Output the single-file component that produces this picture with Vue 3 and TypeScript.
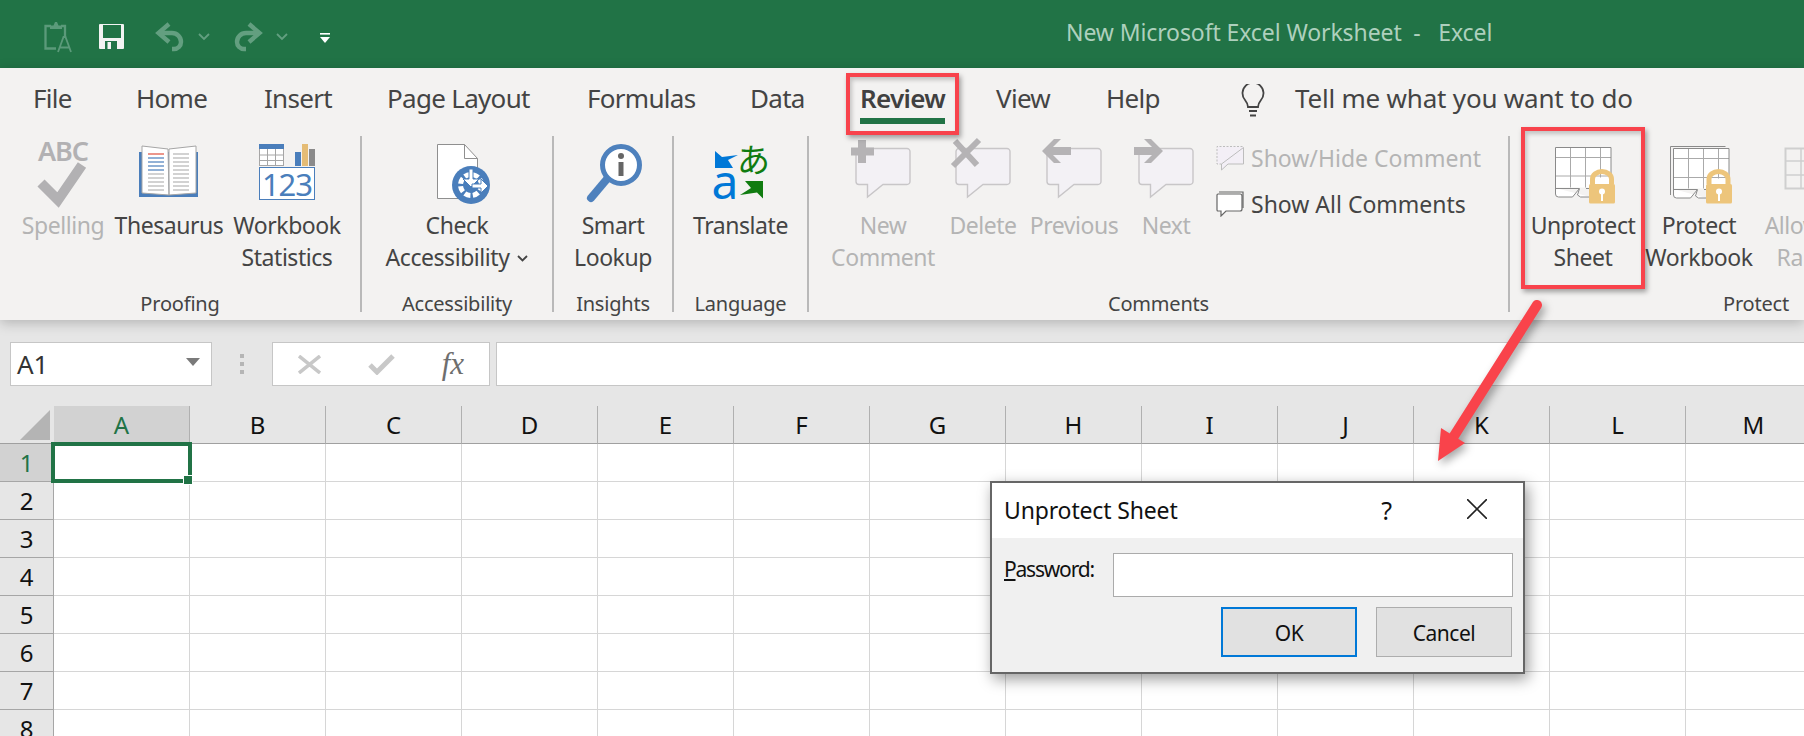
<script setup lang="ts">
const tabs = ['File', 'Home', 'Insert', 'Page Layout', 'Formulas', 'Data', 'Review', 'View', 'Help']
const columns = 'ABCDEFGHIJKLM'.split('')
const rows = [1, 2, 3, 4, 5, 6, 7, 8]

// thesaurus page lines
const pageLines = [12, 16, 20, 24, 28, 32, 36, 40, 44, 48]
function leftLineColor(i: number): string {
  if (i === 0) return '#e0503f'
  if (i < 5) return '#4a7ebb'
  return '#b5b5b5'
}
</script>

<template>
  <div class="page">
    <!-- title bar -->
    <header class="titlebar">
      <div class="qat">
        <svg class="qat-clip" width="28" height="32" viewBox="0 0 28 32" fill="none" stroke="#5b9a7a" stroke-width="2.3">
          <path d="M7 4H1.500v22.500H12M17 4h4v11" />
          <path d="M6 7V3.500h3.500L11 0h2l1.500 3.500H18V7z" fill="#5b9a7a" stroke="none" />
          <path d="M14 30 19.500 15h2L27 30M15.500 25.500h10" stroke-width="1.800" />
        </svg>
        <svg class="qat-save" width="25" height="25" viewBox="0 0 25 25">
          <path d="M1 0h23a1 1 0 0 1 1 1v23a1 1 0 0 1-1 1H1a1 1 0 0 1-1-1V1a1 1 0 0 1 1-1z" fill="#f3f3f3" />
          <rect x="4" y="1" width="18" height="13" fill="#217346" />
          <rect x="6" y="17" width="12" height="8" fill="#217346" />
          <rect x="8.500" y="18" width="3.500" height="7" fill="#f3f3f3" />
        </svg>
        <svg class="qat-undo" width="28" height="28" viewBox="0 0 28 28" fill="none" stroke="#639f80" stroke-width="4.400">
          <path d="M14 2 3.500 11 14 20" />
          <path d="M3.500 11H17a9 9 0 0 1 9 9 7 7 0 0 1-7 7h-2" />
        </svg>
        <svg class="qat-chev" width="12" height="8" viewBox="0 0 12 8" fill="none" stroke="#639f80" stroke-width="1.800"><path d="m1 1 5 5 5-5" /></svg>
        <svg class="qat-redo" width="28" height="28" viewBox="0 0 28 28" fill="none" stroke="#639f80" stroke-width="4.400">
          <path d="M14 2 24.500 11 14 20" />
          <path d="M24.500 11H11a9 9 0 0 0-9 9 7 7 0 0 0 7 7h2" />
        </svg>
        <svg class="qat-chev" width="12" height="8" viewBox="0 0 12 8" fill="none" stroke="#639f80" stroke-width="1.800"><path d="m1 1 5 5 5-5" /></svg>
        <svg class="qat-more" width="10" height="10" viewBox="0 0 10 10"><rect width="10" height="1.600" fill="#fff" /><path d="M0 4h10L5 10z" fill="#fff" /></svg>
      </div>
      <div class="doc-title">New Microsoft Excel Worksheet&nbsp;&nbsp;-&nbsp;&nbsp;&nbsp;Excel</div>
    </header>

    <!-- ribbon -->
    <section class="ribbon">
      <nav class="tabs">
        <div v-for="tab in tabs" :key="tab" class="tab">
          <span :class="{ active: tab === 'Review' }">{{ tab }}</span>
        </div>
        <svg class="bulb" width="24" height="33" viewBox="0 0 24 33" fill="none" stroke="#444" stroke-width="1.800">
          <path d="M7 23c0-3-1-4.500-3-7a10.500 10.500 0 1 1 16 0c-2 2.500-3 4-3 7z" />
          <path d="M8 27h8M9 31.500h6" />
        </svg>
        <div class="tell">Tell me what you want to do</div>
      </nav>

      <div class="groups">
        <!-- Proofing -->
        <div class="group g-proofing">
          <div class="group-body">
            <div class="btn w-spelling off">
              <svg class="ico" width="70" height="68" viewBox="0 0 70 68">
                <text x="35" y="19" class="abc">ABC</text>
                <path d="m13 41 17 17 24-35" fill="none" stroke="#b2b1b3" stroke-width="10" />
              </svg>
              <span class="lbl">Spelling</span>
            </div>
            <div class="btn w-thes">
              <svg class="ico" width="70" height="68" viewBox="0 0 70 68">
                <path d="M5 10h59v45H5z" fill="#4a7ebb" />
                <path d="M8 4l26 3 1 46-27-2zM62 4 35 7v46l27-2z" fill="#fff" stroke="#a6a6a6" stroke-width="1" />
                <path v-for="(y, i) in pageLines" :key="y" :d="`M14 ${y}h16`" :stroke="leftLineColor(i)" stroke-width="1.200" />
                <path v-for="y in pageLines" :key="y" :d="`M39 ${y}h16`" stroke="#b5b5b5" stroke-width="1.200" />
              </svg>
              <span class="lbl">Thesaurus</span>
            </div>
            <div class="btn w-stats">
              <svg class="ico" width="70" height="68" viewBox="0 0 70 68">
                <rect x="7.500" y="2.500" width="24" height="21" fill="#fff" stroke="#a6a6a6" />
                <rect x="7" y="2" width="25" height="5" fill="#4a7ebb" />
                <path d="M7 13h25M7 18.500h25M15.500 7v16M23.500 7v16" stroke="#a6a6a6" />
                <rect x="43" y="10" width="6" height="14" fill="#4a7ebb" />
                <rect x="50" y="2" width="6" height="22" fill="#e5bc75" />
                <rect x="57" y="7" width="6" height="17" fill="#8a8a8a" />
                <rect x="7.500" y="25.500" width="55" height="32" fill="#fff" stroke="#4a7ebb" />
                <text x="35" y="54" class="nums">123</text>
              </svg>
              <span class="lbl">Workbook<br />Statistics</span>
            </div>
          </div>
          <div class="group-label">Proofing</div>
        </div>

        <!-- Accessibility -->
        <div class="group g-access">
          <div class="group-body center">
            <div class="btn">
              <svg class="ico" width="70" height="68" viewBox="0 0 70 68">
                <path d="M15.500 2.500h27l13 14v40h-40z" fill="#fff" stroke="#8f8f8f" />
                <path d="M42.500 2.500v14h13" fill="none" stroke="#8f8f8f" />
                <circle cx="49" cy="43" r="19" fill="#4a7ebb" />
                <circle cx="49" cy="43" r="10.500" fill="none" stroke="#fff" stroke-width="5" stroke-dasharray="6 2.500" />
                <circle cx="49" cy="43" r="7" fill="#4a7ebb" />
                <path d="M47 27h4v10h6l-8 8-8-8h6z" fill="#fff" stroke="#4a7ebb" />
                <path d="M50 42h9v-5l7 7-7 7v-5h-9z" fill="#fff" stroke="#4a7ebb" />
              </svg>
              <span class="lbl">Check<br />Accessibility<svg class="chev" width="11" height="7" viewBox="0 0 11 7" fill="none" stroke="#444" stroke-width="1.800"><path d="m1 1 4.500 4.500L10 1" /></svg></span>
            </div>
          </div>
          <div class="group-label">Accessibility</div>
        </div>

        <!-- Insights -->
        <div class="group g-insights">
          <div class="group-body center">
            <div class="btn">
              <svg class="ico" width="70" height="68" viewBox="0 0 70 68">
                <path d="M29 37 13 56" stroke="#4e81bd" stroke-width="8" stroke-linecap="round" />
                <circle cx="43" cy="23" r="18.500" fill="#fff" stroke="#4e81bd" stroke-width="5" />
                <circle cx="43" cy="14" r="3" fill="#666" />
                <rect x="40.500" y="20" width="5" height="14" fill="#666" />
              </svg>
              <span class="lbl">Smart<br />Lookup</span>
            </div>
          </div>
          <div class="group-label">Insights</div>
        </div>

        <!-- Language -->
        <div class="group g-language">
          <div class="group-body center">
            <div class="btn">
              <svg class="ico" width="70" height="68" viewBox="0 0 70 68">
                <path d="M9 9l7 6 16-2-10 5 5 8H9z" fill="#0078d7" />
                <text x="47.500" y="30" class="kana">あ</text>
                <text x="19" y="57" class="latin-a">a</text>
                <path d="M57 39v17.500l-6-6-17 2.500 11-7-6-7z" fill="#107c10" />
              </svg>
              <span class="lbl">Translate</span>
            </div>
          </div>
          <div class="group-label">Language</div>
        </div>

        <!-- Comments -->
        <div class="group g-comments">
          <div class="group-body pad-comments">
            <div class="btn w-new off">
              <svg class="ico" width="70" height="68" viewBox="0 0 70 68">
                <path class="bubble" d="M11 6.500h48a3 3 0 0 1 3 3v30a3 3 0 0 1-3 3H35L19.500 55V42.500H11a3 3 0 0 1-3-3v-30a3 3 0 0 1 3-3z" />
                <path d="M10 -2h8v7.500h8v8h-8V21h-8v-7.500H3v-8h7z" fill="#b5b3b5" />
              </svg>
              <span class="lbl">New<br />Comment</span>
            </div>
            <div class="btn w-del off">
              <svg class="ico" width="70" height="68" viewBox="0 0 70 68">
                <path class="bubble" d="M11 6.500h48a3 3 0 0 1 3 3v30a3 3 0 0 1-3 3H35L19.500 55V42.500H11a3 3 0 0 1-3-3v-30a3 3 0 0 1 3-3z" />
                <path d="M7-1l22 24M31-2 5 24" stroke="#b5b3b5" stroke-width="6" />
              </svg>
              <span class="lbl">Delete</span>
            </div>
            <div class="btn w-prev off">
              <svg class="ico" width="70" height="68" viewBox="0 0 70 68">
                <path class="bubble" d="M11 6.500h48a3 3 0 0 1 3 3v30a3 3 0 0 1-3 3H35L19.500 55V42.500H11a3 3 0 0 1-3-3v-30a3 3 0 0 1 3-3z" />
                <path d="M15-3 3 9l12 12h7l-8-8h18V5H14l8-8z" fill="#b5b3b5" />
              </svg>
              <span class="lbl">Previous</span>
            </div>
            <div class="btn w-next off">
              <svg class="ico" width="70" height="68" viewBox="0 0 70 68">
                <path class="bubble" d="M11 6.500h48a3 3 0 0 1 3 3v30a3 3 0 0 1-3 3H35L19.500 55V42.500H11a3 3 0 0 1-3-3v-30a3 3 0 0 1 3-3z" />
                <path d="M20-3 32 9 20 21h-7l8-8H3V5h18l-8-8z" fill="#b5b3b5" />
              </svg>
              <span class="lbl">Next</span>
            </div>
            <div class="comment-list">
              <div class="comment-row off">
                <svg width="28" height="25" viewBox="0 0 28 25" fill="none">
                  <path d="M1 .5h26.500v17.500H12l-6.500 6V18H1z" fill="#f3eff6" />
                  <path d="M5.500 18 27.500 1.500V18H12l-6.500 6z" stroke="#bdbdbd" />
                  <path d="M5.500 18H1V.5h26.500" stroke="#bdbdbd" stroke-dasharray="2 1.500" />
                </svg>
                <span>Show/Hide Comment</span>
              </div>
              <div class="comment-row">
                <svg width="28" height="26" viewBox="0 0 28 26" fill="none" stroke="#666" stroke-width="1.200">
                  <path d="M3 1h24v16" />
                  <path d="M2 3h22a2 2 0 0 1 2 2v13a2 2 0 0 1-2 2H10l-5 5v-5H2a1 1 0 0 1-1-1V4a1 1 0 0 1 1-1z" fill="#fff" />
                </svg>
                <span>Show All Comments</span>
              </div>
            </div>
          </div>
          <div class="group-label">Comments</div>
        </div>

        <!-- Protect -->
        <div class="group g-protect">
          <div class="group-body pad-protect">
            <div class="btn w-prot">
              <svg class="ico" width="70" height="68" viewBox="0 0 70 68">
                <path d="M7.500 5.500h55.500v40H7.500z" fill="#fff" />
                <path d="M7.500 15.500H63M7.500 34H63M22.500 5.500v40M37.500 5.500v40M52.500 5.500v30" fill="none" stroke="#aaa" />
                <path d="M7.500 46V5.500H63v36" fill="none" stroke="#8a8a8a" />
                <path d="M7.500 46v6a3 3 0 0 0 3 3h14l7-8.500-2 6.500 3 2h10M7.500 46.500H31M38 46.500h7" fill="#fff" stroke="#8a8a8a" />
                <path d="M44.500 42v-5a9.500 7.500 0 0 1 19 0v5" fill="none" stroke="#edc57b" stroke-width="5" />
                <rect x="41" y="42" width="26" height="19.500" rx="1.500" fill="#edc57b" />
                <circle cx="54" cy="49.500" r="3" fill="#fff" />
                <rect x="53" y="50" width="2" height="9" fill="#fff" />
              </svg>
              <span class="lbl">Unprotect<br />Sheet</span>
            </div>
            <div class="btn w-prot">
              <svg class="ico" width="70" height="68" viewBox="0 0 70 68">
                <path d="M6.500 53V4.500h55" fill="none" stroke="#8a8a8a" />
                <path d="M9.500 6.500H65v40H9.500z" fill="#fff" />
                <path d="M9.500 16.500H65M9.500 35.500H65M24.500 6.500v40M39.500 6.500v40M54.500 6.500v30" fill="none" stroke="#aaa" />
                <path d="M9.500 47V6.500H65v36" fill="none" stroke="#8a8a8a" />
                <path d="M9.500 47v6a3 3 0 0 0 3 3h14l7-8.500-2 6.500 3 2h8M9.500 47.500H33M40 47.500h6" fill="#fff" stroke="#8a8a8a" />
                <path d="M45 42v-5a9.500 7.500 0 0 1 19 0v5" fill="none" stroke="#edc57b" stroke-width="5" />
                <rect x="42" y="42" width="26" height="19.500" rx="1.500" fill="#edc57b" />
                <circle cx="55" cy="49.500" r="3" fill="#fff" />
                <rect x="54" y="50" width="2" height="9" fill="#fff" />
              </svg>
              <span class="lbl">Protect<br />Workbook</span>
            </div>
            <div class="btn w-prot off">
              <svg class="ico" width="70" height="68" viewBox="0 0 70 68">
                <rect x="5.500" y="6.500" width="62" height="40" fill="#f3f2f1" stroke="#cfcfcf" stroke-width="2" />
                <path d="M5 19h62M5 33h62M21 6v40" stroke="#cfcfcf" stroke-width="1.500" />
              </svg>
              <span class="lbl">Allow Edit<br />Ranges</span>
            </div>
          </div>
          <div class="group-label">Protect</div>
        </div>
      </div>
    </section>

    <!-- formula bar -->
    <div class="formula-bar">
      <div class="name-box">
        <span>A1</span>
        <svg width="14" height="8" viewBox="0 0 14 8"><path d="M0 0h14L7 8z" fill="#7a7a7a" /></svg>
      </div>
      <div class="grip"><i></i><i></i><i></i></div>
      <div class="fx-box">
        <svg width="23" height="19" viewBox="0 0 23 19" fill="none" stroke="#c8c8c8" stroke-width="3.500"><path d="m1 1 21 17M22 1 1 18" /></svg>
        <svg width="27" height="21" viewBox="0 0 27 21" fill="none" stroke="#c8c8c8" stroke-width="5"><path d="m2 11 7 7L25 2" /></svg>
        <span class="fx">fx</span>
      </div>
      <div class="formula-input"></div>
    </div>

    <!-- sheet -->
    <div class="sheet">
      <div class="corner"><span class="corner-tri"></span></div>
      <div v-for="col in columns" :key="col" class="col-head" :class="{ sel: col === 'A' }">{{ col }}</div>
      <template v-for="row in rows" :key="row">
        <div class="row-head" :class="{ sel: row === 1 }">{{ row }}</div>
        <div v-for="col in columns" :key="col" class="cell">
          <div v-if="row === 1 && col === 'A'" class="cursor"><span class="handle"></span></div>
        </div>
      </template>
    </div>

    <!-- annotations -->
    <div class="callout call-review"></div>
    <div class="callout call-unprotect"></div>
    <svg class="arrow" width="1804" height="736" viewBox="0 0 1804 736">
      <path d="M1537 305 1454 436" stroke="#f9434b" stroke-width="10" stroke-linecap="round" />
      <path d="M1438 461l3-33 24 15z" fill="#f9434b" />
    </svg>

    <!-- dialog -->
    <div class="dialog">
      <div class="dlg-title">
        <span class="dlg-name">Unprotect Sheet</span>
        <span class="dlg-help">?</span>
        <svg class="dlg-close" width="20" height="20" viewBox="0 0 20 20" stroke="#222" stroke-width="1.600"><path d="m0 0 20 20M20 0 0 20" /></svg>
      </div>
      <div class="dlg-body">
        <div class="dlg-field">
          <label><u>P</u>assword:</label>
          <div class="dlg-input"></div>
        </div>
        <div class="dlg-actions">
          <button class="dlg-btn primary">OK</button>
          <button class="dlg-btn">Cancel</button>
        </div>
      </div>
    </div>
  </div>
</template>

<style scoped>
.page {
  position: relative;
  width: 1804px;
  height: 736px;
  overflow: hidden;
  background: #fff;
  font-family: 'Noto Sans', 'Open Sans', sans-serif;
  color: #444;
}

/* title bar */
.titlebar {
  position: relative;
  height: 68px;
  background: #217346;
}

.qat {
  display: flex;
  align-items: flex-start;
  padding: 22px 0 0 44px;
}
.qat svg { overflow: visible; }
.qat-clip { margin-right: 27px; }
.qat-save { margin-top: 2px; margin-right: 31px; }
.qat-undo { margin-right: 15px; }
.qat-redo { margin-right: 13px; }
.qat-chev { margin-top: 11px; margin-right: 25px; }
.qat-redo + .qat-chev { margin-right: 32px; }
.qat-more { margin-top: 11px; }

.doc-title {
  position: absolute;
  left: 1066px;
  top: 15px;
  font-size: 23px;
  line-height: 34px;
  color: #aed0bd;
  white-space: nowrap;
  letter-spacing: -0.1px;
}

/* ribbon */
.ribbon {
  position: relative;
  z-index: 2;
  height: 252px;
  background: #f3f2f1;
  box-shadow: 0 3px 12px rgba(0, 0, 0, 0.22);
}

.tabs {
  display: grid;
  grid-template-columns: 103px 128px 123px 200px 163px 110px 136px 110px 135px 54px auto;
  height: 68px;
  padding: 13px 0 0 33px;
  box-sizing: border-box;
  font-size: 26px;
  line-height: 34px;
  letter-spacing: -0.7px;
}
.tab span {
  display: inline-block;
  white-space: nowrap;
}
.tab .active {
  font-weight: 600;
  color: #404040;
  padding-bottom: 3px;
  border-bottom: 6px solid #217346;
}
.bulb { margin-top: 3px; }
.tell { white-space: nowrap; letter-spacing: -0.2px; }

.groups { display: flex; height: 176px; }
.group {
  flex: none;
  display: flex;
  flex-direction: column;
  box-sizing: border-box;
  border-right: 2px solid #b9b9b9;
}
.g-proofing { width: 362px; }
.g-access { width: 192px; }
.g-insights { width: 120px; }
.g-language { width: 135px; }
.g-comments { width: 701px; }
.g-protect { width: 492px; border-right: 0; }

.group-body {
  flex: 1;
  display: flex;
  padding: 6px 0 0 8px;
}
.group-body.center { justify-content: center; padding-left: 0; }
.pad-comments { padding-left: 14px; }
.pad-protect { padding-left: 15px; }

.group-label {
  height: 16px;
  line-height: 16px;
  text-align: center;
  font-size: 20px;
  letter-spacing: -0.2px;
  white-space: nowrap;
}

.btn {
  flex: none;
  display: flex;
  flex-direction: column;
  align-items: center;
  text-align: center;
}
.ico { flex: none; overflow: visible; }
.lbl {
  display: block;
  margin-top: -1px;
  font-size: 23px;
  line-height: 32px;
  letter-spacing: -0.45px;
  white-space: nowrap;
}
.off .lbl,
.off span { color: #b4b4b4; }
.chev { margin-left: 8px; vertical-align: 4px; }

.w-spelling { width: 110px; }
.w-thes { width: 102px; }
.w-stats { width: 134px; }
.w-new { width: 120px; }
.w-del { width: 80px; }
.w-prev { width: 102px; }
.w-next { width: 82px; }
.w-prot { width: 116px; }

.abc {
  font-size: 27px;
  font-weight: 600;
  fill: #b2b1b3;
  text-anchor: middle;
  letter-spacing: -1px;
}
.nums {
  font-size: 31px;
  fill: #4a7ebb;
  text-anchor: middle;
  letter-spacing: -1px;
}
.kana {
  font-family: 'Noto Sans CJK JP', sans-serif;
  font-size: 33px;
  fill: #107c10;
  text-anchor: middle;
}
.latin-a {
  font-size: 48px;
  fill: #0078d7;
  text-anchor: middle;
}
.bubble {
  fill: #f3f1f5;
  stroke: #c8c6c8;
  stroke-width: 1.4;
}

.comment-list {
  margin: -7px 0 0 9px;
  font-size: 23px;
}
.comment-row {
  display: flex;
  align-items: center;
  gap: 7px;
  height: 46px;
  white-space: nowrap;
}

/* formula bar */
.formula-bar {
  display: flex;
  align-items: flex-start;
  height: 86px;
  padding: 22px 0 0 10px;
  box-sizing: border-box;
  background: #e6e6e6;
}
.name-box,
.fx-box,
.formula-input {
  height: 44px;
  box-sizing: border-box;
  background: #fff;
  border: 1.5px solid #c6c6c6;
}
.name-box {
  flex: none;
  display: flex;
  align-items: center;
  justify-content: space-between;
  width: 202px;
  padding: 0 11px 0 6px;
  font-size: 26px;
  color: #333;
}
.name-box svg { margin-bottom: 4px; }
.grip {
  flex: none;
  display: flex;
  flex-direction: column;
  gap: 4px;
  margin: 12px 28px 0 28px;
}
.grip i {
  width: 4px;
  height: 4px;
  background: #b5b5b5;
}
.fx-box {
  flex: none;
  display: flex;
  align-items: center;
  justify-content: space-between;
  width: 218px;
  padding: 0 25px 0 25px;
}
.fx {
  font-family: 'Liberation Serif', serif;
  font-style: italic;
  font-size: 31px;
  color: #6e6e6e;
}
.formula-input {
  flex: 1;
  margin-left: 6px;
  border-right: 0;
}

/* sheet */
.sheet {
  display: grid;
  grid-template-columns: 54px repeat(13, 136px);
  grid-template-rows: 38px repeat(8, 38px);
}
.corner {
  display: flex;
  align-items: flex-end;
  justify-content: flex-end;
  padding: 0 4px 3px 0;
  background: #e6e6e6;
  border-bottom: 1.5px solid #a0a0a0;
}
.corner-tri {
  width: 30px;
  height: 30px;
  background: #b4b4b4;
  clip-path: polygon(100% 0, 100% 100%, 0 100%);
}
.col-head,
.row-head {
  display: flex;
  align-items: center;
  justify-content: center;
  box-sizing: border-box;
  background: #e6e6e6;
  font-size: 24px;
  color: #111;
}
.col-head {
  border-right: 1.5px solid #b0b0b0;
  border-bottom: 1.5px solid #a0a0a0;
}
.row-head {
  border-right: 1.5px solid #a6a6a6;
  border-bottom: 1.5px solid #a6a6a6;
}
.col-head.sel,
.row-head.sel {
  background: #d2d2d2;
  color: #217346;
}
.cell {
  position: relative;
  box-sizing: border-box;
  border-right: 1.5px solid #d6d6d6;
  border-bottom: 1.5px solid #d6d6d6;
}
.cursor {
  position: absolute;
  left: -3px;
  top: -2px;
  width: 141px;
  height: 41px;
  box-sizing: border-box;
  border: 4px solid #217346;
  z-index: 1;
}
.handle {
  position: absolute;
  right: -4px;
  bottom: -5px;
  width: 8px;
  height: 8px;
  background: #217346;
  box-shadow: 0 0 0 1px #fff;
}

/* annotations */
.callout {
  position: absolute;
  z-index: 3;
  box-sizing: border-box;
  border: 4px solid #f8434c;
  box-shadow: 2px 3px 5px rgba(0, 0, 0, 0.35), inset 2px 3px 4px rgba(0, 0, 0, 0.2);
}
.call-review {
  left: 846px;
  top: 73px;
  width: 113px;
  height: 62px;
}
.call-unprotect {
  left: 1521px;
  top: 127px;
  width: 124px;
  height: 162px;
}
.arrow {
  position: absolute;
  left: 0;
  top: 0;
  z-index: 3;
  pointer-events: none;
  filter: drop-shadow(3px 4px 4px rgba(0, 0, 0, 0.35));
}

/* dialog */
.dialog {
  position: absolute;
  z-index: 4;
  left: 990px;
  top: 481px;
  width: 535px;
  height: 193px;
  box-sizing: border-box;
  display: flex;
  flex-direction: column;
  border: 2px solid #666;
  background: #f0f0f0;
  box-shadow: 3px 5px 14px rgba(0, 0, 0, 0.4);
  color: #111;
}
.dlg-title {
  flex: none;
  display: flex;
  align-items: center;
  height: 55px;
  padding: 0 36px 0 12px;
  background: #fff;
}
.dlg-name {
  flex: 1;
  margin-bottom: 2px;
  font-size: 23px;
  letter-spacing: -0.15px;
}
.dlg-help {
  font-size: 25px;
  margin-right: 75px;
  margin-bottom: 2px;
}
.dlg-close { margin-bottom: 3px; }
.dlg-body {
  flex: 1;
  padding: 15px 10px 0 12px;
}
.dlg-field {
  display: flex;
  align-items: flex-start;
  justify-content: space-between;
}
.dlg-field label {
  font-size: 21px;
  line-height: 32px;
  letter-spacing: -1.2px;
}
.dlg-input {
  width: 400px;
  height: 44px;
  box-sizing: border-box;
  background: #fff;
  border: 1.5px solid #ababab;
}
.dlg-actions {
  display: flex;
  justify-content: flex-end;
  gap: 19px;
  margin-top: 10px;
  padding-right: 1px;
}
.dlg-btn {
  width: 136px;
  height: 50px;
  box-sizing: border-box;
  padding: 2px 0 0;
  background: #e1e1e1;
  border: 1.5px solid #adadad;
  font-family: inherit;
  font-size: 21px;
  letter-spacing: -0.5px;
  color: #111;
}
.dlg-btn.primary {
  border: 2px solid #0078d7;
}
</style>
